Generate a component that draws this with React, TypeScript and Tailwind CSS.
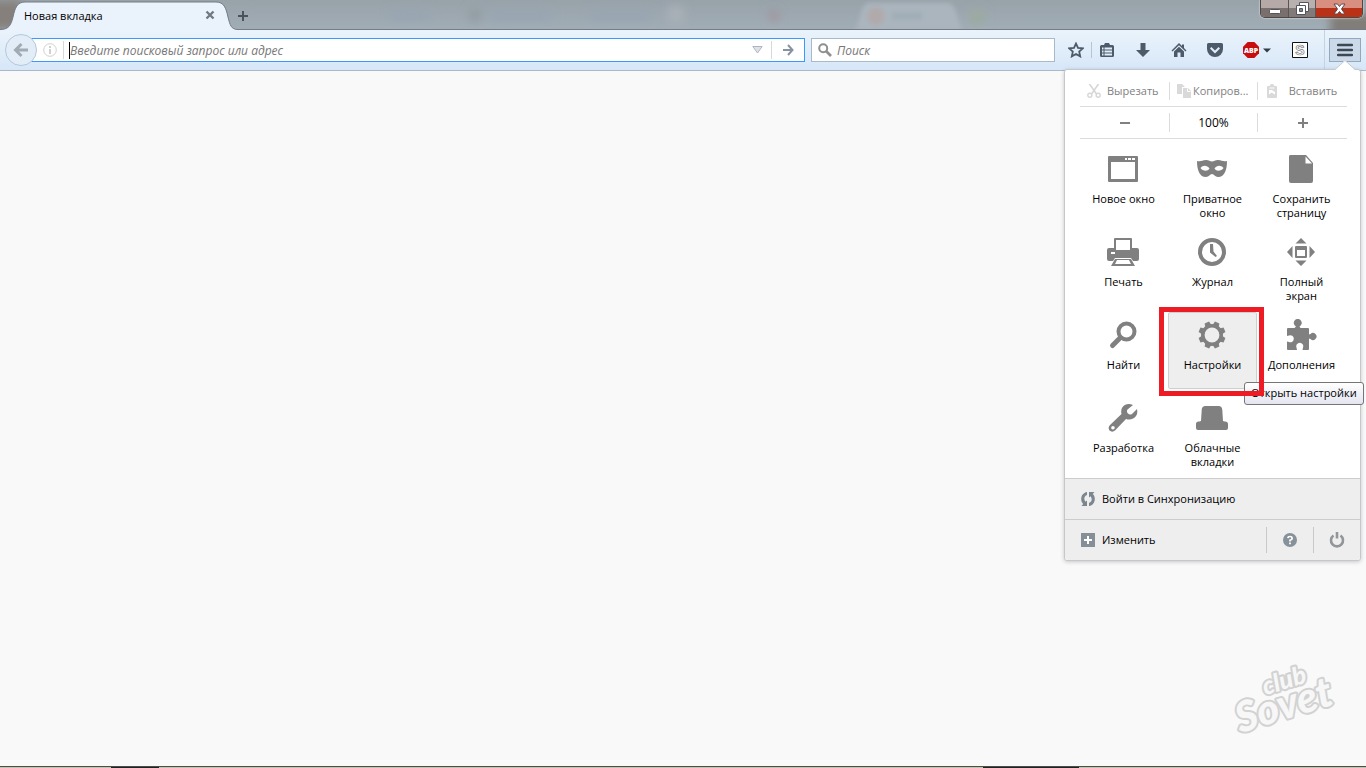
import type { ReactNode } from "react";
import clsx from "clsx";

const TOOL_COLOR = "#4d5a69";

type MenuItem = {
  label: string;
  icon: ReactNode;
  active?: boolean;
};

const menuItems: MenuItem[] = [
  {
    label: "Новое окно",
    icon: (
      <path
        fillRule="evenodd"
        d="M2 3h28a1 1 0 0 1 1 1v24a1 1 0 0 1-1 1H2a1 1 0 0 1-1-1V4a1 1 0 0 1 1-1zM4 9v17h24V9zM18 5v2h2V5zm3 0v2h3V5zm4 0v2h3V5z"
      />
    ),
  },
  {
    label: "Приватное окно",
    icon: (
      <path
        fillRule="evenodd"
        d="M1 8c4 1 5-1 9-1 3 0 4 1.500 6 1.500S19 7 22 7c4 0 5 2 9 1 0 8-2 16-9 16-3 0-4-3-6-3s-3 3-6 3C3 24 1 16 1 8zM4.500 15c2 3 7 4 9 .5C11 12 7 12 4.500 15zm14 .5c2 3.500 7 2.500 9-.5-2.500-3-6.500-3-9 .5z"
      />
    ),
  },
  {
    label: "Сохранить страницу",
    icon: (
      <path
        fillRule="evenodd"
        d="M5 2h16l7 8v18a2 2 0 0 1-2 2H6a2 2 0 0 1-2-2V4a2 2 0 0 1 1-2zM20.500 3.500V10.500H27z"
      />
    ),
  },
  {
    label: "Печать",
    icon: (
      <>
        <path fillRule="evenodd" d="M8 2h16a1 1 0 0 1 1 1v12H7V3a1 1 0 0 1 1-1zm1 2v10h14V4z" />
        <path
          fillRule="evenodd"
          d="M2 12h5v2h18v-2h5a2 2 0 0 1 2 2v9a2 2 0 0 1-2 2h-4l-2-3H8l-2 3H2a2 2 0 0 1-2-2v-9a2 2 0 0 1 2-2zm2 4v2h4v-2z"
        />
        <path fillRule="evenodd" d="M8 23h16l4 7H4zm2 1l-2 4h16l-2-4z" />
      </>
    ),
  },
  {
    label: "Журнал",
    icon: (
      <>
        <circle cx="16" cy="16" r="12" fill="none" stroke="currentColor" strokeWidth="4" />
        <path d="M14 8h3l.5 7.500L21 20l-1.500 1L14 16.500z" />
      </>
    ),
  },
  {
    label: "Полный экран",
    icon: (
      <>
        <path
          fillRule="evenodd"
          d="M11 10h10a1 1 0 0 1 1 1v10a1 1 0 0 1-1 1H11a1 1 0 0 1-1-1V11a1 1 0 0 1 1-1zm1 4v6h8v-6z"
        />
        <path d="M16 2l5.500 5.500h-11zM16 30l5.500-5.500h-11zM2 16l5.500-6v12zM30 16l-5.500-6v12z" />
      </>
    ),
  },
  {
    label: "Найти",
    icon: (
      <>
        <circle cx="19.500" cy="12.500" r="8" fill="none" stroke="currentColor" strokeWidth="4" />
        <path d="M13 19l-7.500 7.500" fill="none" stroke="currentColor" strokeWidth="5" strokeLinecap="round" />
      </>
    ),
  },
  {
    label: "Настройки",
    active: true,
    icon: (
      <>
        <circle cx="16" cy="16" r="9.200" fill="none" stroke="currentColor" strokeWidth="3.600" />
        <g>
          {[22.5, 67.5, 112.5, 157.5, 202.5, 247.5, 292.5, 337.5].map((angle) => (
            <path key={angle} d="M12.800 6.500L13.600 2.500h4.800l.8 4z" transform={`rotate(${angle} 16 16)`} />
          ))}
        </g>
      </>
    ),
  },
  {
    label: "Дополнения",
    icon: (
      <path d="M3 9H9.500L11 7.500A4 4 0 1 1 14.500 7.500L15.500 9H23q1 0 1 1v5.500l1.500-.5A3.500 3.500 0 1 1 25.500 20L24 19.500V30q0 1-1 1H17.500l.5-2.500a3.500 3.500 0 1 0-6.500 0L12 31H3q-1 0-1-1V22.500l2 .5A3.500 3.500 0 1 0 4 16.500L2 17V10q0-1 1-1z" />
    ),
  },
  {
    label: "Разработка",
    icon: (
      <path
        fillRule="evenodd"
        d="M26 3c-4-2-9-1-11 3-1 2-1 4-.5 6L3 23c-2 2-1.500 4-.5 5.500 1.500 1.500 4 1.500 5.500 0L19 17c4 1.500 8 0 10-3 1.500-2 1.500-4.500 1-7l-5 5c-1.500 1-3 .5-4-.5s-1.500-2.500-.5-4zM6 24a1.800 1.800 0 1 1-.1 3.600A1.800 1.800 0 0 1 6 24z"
      />
    ),
  },
  {
    label: "Облачные вкладки",
    icon: (
      <path d="M10 4h12c3 0 4 1 4.300 4L27 19c2 1 5 0 5 3v4a2 2 0 0 1-2 2H2a2 2 0 0 1-2-2v-4c0-3 3-2 5-3l.7-11C6 5 7 4 10 4z" />
    ),
  },
];

function TitleBar() {
  return (
    <header className="relative flex h-[30px] shrink-0 border-b border-[#747d85] bg-linear-to-b from-[#98a2a9] to-[#a1adb6]">
      {/* blurred windows showing through the glass frame */}
      <svg className="absolute inset-0 h-full w-full" aria-hidden="true">
        <defs>
          <filter id="glass">
            <feGaussianBlur stdDeviation="5" />
          </filter>
          <filter id="soft">
            <feGaussianBlur stdDeviation="2" />
          </filter>
        </defs>
        <g filter="url(#glass)">
          <rect x="-20" y="0" width="42" height="30" fill="#85807c" />
          <rect x="1330" y="14" width="60" height="30" fill="#817d78" />
          <rect x="390" y="11" width="40" height="10" fill="#98a5b2" />
          <rect x="490" y="11" width="60" height="10" fill="#98a5b2" />
          <rect x="590" y="11" width="60" height="10" fill="#98a5b2" />
          <circle cx="475" cy="15" r="7" fill="#919ba2" />
          <circle cx="676" cy="14" r="9" fill="#aab1b8" />
          <circle cx="977" cy="17" r="8" fill="#9bab9f" />
          <circle cx="774" cy="16" r="5" fill="#a18f98" />
        </g>
        <g filter="url(#soft)">
          <path d="M856 30l6-20q2-7 8-7h76q7 0 9 7l7 20z" fill="#aab5bd" />
          <circle cx="876" cy="16" r="9" fill="#b0aaac" />
          <rect x="892" y="12" width="30" height="8" fill="#a0adb7" />
        </g>
      </svg>
      <div className="relative flex h-[30px] w-[230px] items-center">
        <svg className="absolute inset-0 h-[30px] w-[238px]" viewBox="0 0 238 30" aria-hidden="true">
          <path
            d="M0 29.500C9 29.500 11 25 13 17 15 8 17 2 25 2H216C224 2 226 8 228 17 230 25 231 29.500 238 29.500V30H0z"
            fill="#eaf2fb"
          />
          <path
            d="M0 29.500C9 29.500 11 25 13 17 15 8 17 2 25 2H216C224 2 226 8 228 17 230 25 231 29.500 238 29.500"
            fill="none"
            stroke="#747b82"
          />
        </svg>
        <span className="relative ml-6 flex-1 pt-0.5 text-black">Новая вкладка</span>
        <button aria-label="Закрыть вкладку" className="relative mr-3 flex h-4 w-4 items-center justify-center">
          <svg width="10" height="10" viewBox="0 0 10 10" aria-hidden="true">
            <path d="M1.500 1.500l7 7M8.500 1.500l-7 7" stroke="#727980" strokeWidth="2.400" />
          </svg>
        </button>
      </div>
      <button aria-label="Новая вкладка" className="relative ml-[5px] flex w-4 items-center justify-center pt-0.5">
        <svg width="12" height="12" viewBox="0 0 12 12" aria-hidden="true">
          <path d="M6 1v10M1 6h10" stroke="#4a535b" strokeWidth="2" />
        </svg>
      </button>
      <div className="relative mr-[3px] ml-auto flex h-[18px] overflow-hidden rounded-b-[5px] border border-t-0 border-[#4d4746] shadow-[0_0_2px_#ffffff]">
        <button
          aria-label="Свернуть"
          className="flex w-7 items-center justify-center border-r border-[#5a5555] bg-linear-to-b from-[#b5aaa7] from-45% to-[#796f6c] to-50%"
        >
          <svg width="12" height="14" viewBox="0 0 12 14" aria-hidden="true">
            <rect x=".5" y="7.500" width="11" height="4" rx="1" fill="#fff" stroke="#52565e" />
          </svg>
        </button>
        <button
          aria-label="Восстановить"
          className="flex w-[27px] items-center justify-center border-r border-[#5a5555] bg-linear-to-b from-[#b8b0ae] from-45% to-[#82797a] to-50%"
        >
          <svg width="13" height="13" viewBox="0 0 13 13" aria-hidden="true">
            <path d="M3.500.5h9v9h-9z" fill="#fff" stroke="#52565e" />
            <path d="M.5 3.500h9v9h-9z" fill="#fff" stroke="#52565e" />
            <path d="M3.500 6.500h3v3h-3z" fill="#8c8484" stroke="#52565e" />
          </svg>
        </button>
        <button
          aria-label="Закрыть"
          className="flex w-[46px] items-center justify-center bg-linear-to-b from-[#d88f80] from-45% to-[#b93116] to-50%"
        >
          <svg width="13" height="12" viewBox="0 0 13 12" aria-hidden="true">
            <path
              d="M1 1h3.500l2 2.500 2-2.500H12L8.500 6l3.500 5H8.500l-2-2.500-2 2.500H1l3.500-5z"
              fill="#fff"
              stroke="#5b4a50"
            />
          </svg>
        </button>
      </div>
    </header>
  );
}

function ToolButton({ label, className, children }: { label: string; className: string; children: ReactNode }) {
  return (
    <button aria-label={label} className={clsx("flex h-6 items-center justify-center", className)}>
      <svg width="16" height="16" viewBox="0 0 16 16" fill={TOOL_COLOR} aria-hidden="true">
        {children}
      </svg>
    </button>
  );
}

function AddressBar() {
  return (
    <div className="flex flex-1 items-center">
      <button
        aria-label="Назад"
        className="z-10 flex h-8 w-8 items-center justify-center rounded-full border border-[#b5c7dc] bg-[#e3edf8]"
      >
        <svg width="16" height="16" viewBox="0 0 16 16" aria-hidden="true">
          <path d="M8.500 2L2.500 8l6 6M3 8h12" fill="none" stroke="#a1abb4" strokeWidth="3" />
        </svg>
      </button>
      <div className="-ml-2 flex h-6 flex-1 items-center border border-[#3b99fc] bg-white pl-[13px]">
        <svg width="14" height="14" viewBox="0 0 14 14" aria-hidden="true">
          <circle cx="7" cy="7" r="6.300" fill="none" stroke="#d0d0d0" />
          <path d="M6 3h2v2H6zM6 6h2v5H6z" fill="#d0d0d0" />
        </svg>
        <span className="mr-[5px] ml-1.5 h-[18px] w-px bg-[#d8d8d8]" />
        <span className="h-[17px] w-px bg-black" />
        <input
          aria-label="Адресная строка"
          placeholder="Введите поисковый запрос или адрес"
          className="min-w-0 flex-1 bg-transparent pt-0.5 text-xs italic outline-none placeholder:text-[#777777]"
        />
        <button aria-label="Показать историю" className="flex w-7 justify-center">
          <svg width="11" height="8" viewBox="0 0 11 8" aria-hidden="true">
            <path d="M.8.500h9.400L5.500 7z" fill="#dde2e8" stroke="#b0b6bd" />
          </svg>
        </button>
        <span className="h-[18px] w-px bg-[#d8d8d8]" />
        <button aria-label="Перейти" className="flex w-8 justify-center">
          <svg width="12" height="12" viewBox="0 0 12 12" aria-hidden="true">
            <path d="M6 1l4.500 5L6 11M1 6h9" fill="none" stroke="#8793a1" strokeWidth="2" />
          </svg>
        </button>
      </div>
    </div>
  );
}

function Toolbar() {
  return (
    <nav className="relative flex h-[41px] shrink-0 items-center border-b border-[#a9b8cd] bg-linear-to-b from-[#eaf3fb] to-[#d7e7f8] pr-[5px] pl-[5px]">
      <AddressBar />
      <div className="ml-1.5 flex h-6 w-[244px] items-center border border-[#a9b9cc] bg-white pl-1.5">
        <svg width="14" height="14" viewBox="0 0 14 14" aria-hidden="true">
          <circle cx="5.200" cy="5.200" r="4" fill="none" stroke="#8f8f8f" strokeWidth="2" />
          <path d="M8 8l5 5" stroke="#8f8f8f" strokeWidth="2.600" />
        </svg>
        <input
          aria-label="Поиск"
          placeholder="Поиск"
          className="ml-[5px] min-w-0 flex-1 bg-transparent pt-0.5 text-xs italic outline-none placeholder:text-[#777777]"
        />
      </div>

      <ToolButton label="Добавить в закладки" className="ml-1.5 w-[30px]">
        <path
          d="M8 1.500l2 4.400 4.800.5-3.600 3.200 1 4.800L8 12l-4.200 2.400 1-4.800L1.200 6.400 6 5.900z"
          fill="none"
          stroke={TOOL_COLOR}
          strokeWidth="1.800"
        />
      </ToolButton>
      <span className="mr-px h-4 w-px bg-[#b6c4d3]" />
      <ToolButton label="Закладки" className="w-7">
        <path
          fillRule="evenodd"
          d="M2.500 3H5l1-2h4l1 2h2.500Q15 3 15 4.500v9q0 1.500-1.500 1.500h-11Q1 15 1 13.500v-9Q1 3 2.500 3zM3 5.500v2h1.500v-2zm2.500 0v2H13v-2zM3 8.500v2h1.500v-2zm2.500 0v2H13v-2zM3 11.500v2h1.500v-2zm2.500 0v2H13v-2z"
        />
      </ToolButton>
      <ToolButton label="Загрузки" className="ml-1 w-9">
        <path d="M5.500 1h5v7H15l-7 7-7-7h4.500z" />
      </ToolButton>
      <ToolButton label="Домой" className="w-9">
        <path d="M8 1L.5 8.500l1 1L8 3.200l6.500 6.300 1-1L13 6V2.500h-2V4z" />
        <path d="M8 4.800L3 9.500V15h3.500v-4.500h3V15H13V9.500z" />
      </ToolButton>
      <ToolButton label="Pocket" className="w-9">
        <path
          fillRule="evenodd"
          d="M1.500 1h13Q16 1 16 2.500V7A8 8 0 0 1 0 7V2.500Q0 1 1.500 1zM3 6.500l5 5 5-5L11.600 5 8 8.500 4.400 5z"
        />
      </ToolButton>
      <button aria-label="Adblock Plus" className="flex h-6 w-10 items-center justify-end gap-1 pr-0.5">
        <svg width="16" height="16" viewBox="0 0 16 16" aria-hidden="true">
          <path d="M4.700 0h6.600L16 4.700v6.600L11.300 16H4.700L0 11.300V4.700z" fill="#c70d0d" />
          <text
            x="8"
            y="10.500"
            textAnchor="middle"
            fontSize="7"
            fontWeight="800"
            fill="#fff"
            className="font-['Open_Sans',sans-serif]"
          >
            ABP
          </text>
        </svg>
        <svg width="8" height="5" viewBox="0 0 8 5" aria-hidden="true">
          <path d="M0 .5h8L4 4.500z" fill="#333b44" />
        </svg>
      </button>
      <button aria-label="S" className="ml-[11px] flex h-6 w-8 items-center justify-center">
        <svg width="16" height="16" viewBox="0 0 16 16" aria-hidden="true">
          <path d="M.5.500h15v15H.5z" fill="#fff" stroke="#111" />
          <text
            x="8"
            y="13"
            textAnchor="middle"
            fontSize="14"
            fontWeight="700"
            fill="#fff"
            stroke="#777"
            strokeWidth=".7"
            className="font-['Liberation_Sans',sans-serif]"
          >
            S
          </text>
        </svg>
      </button>
      <span className="mr-1 ml-2 h-10 w-px bg-[#c3d3e4]" />
      <div className="relative">
        <button
          aria-label="Открыть меню"
          className="flex h-6 w-8 items-center justify-center border border-[#93a7be] bg-[#cbd9e8]"
        >
          <svg width="16" height="14" viewBox="0 0 16 14" aria-hidden="true">
            <path d="M1 2h14M1 7h14M1 12h14" stroke="#3d4855" strokeWidth="2.400" strokeLinecap="round" />
          </svg>
        </button>
        <MainMenu />
      </div>
    </nav>
  );
}

function MainMenu() {
  return (
    <div className="absolute top-[31px] right-0 z-20 w-[297px] rounded-[3px] border border-[#c4c8cc] bg-white shadow-[0_1px_4px_rgba(0,0,0,0.2)]">
      <svg className="absolute -top-[10px] right-[5px]" width="20" height="11" viewBox="0 0 20 11" aria-hidden="true">
        <path d="M0 10L10 0l10 10v1H0z" fill="#fff" />
        <path d="M0 9.500L10 .5l10 9" fill="none" stroke="#c4ccd6" />
      </svg>
      <div className="px-3.5 pt-1.5">
        <div className="-mr-px ml-px grid h-[31px] grid-cols-3 items-center border-b border-[#dcdcdc] text-[#7f7f7f]">
          <button className="flex h-[18px] items-center">
            <svg className="ml-[7px] shrink-0" width="14" height="14" viewBox="0 0 14 14" aria-hidden="true">
              <path d="M2.500 0l7 10M11.500 0l-7 10" stroke="#d6d6d6" strokeWidth="1.600" />
              <circle cx="2.800" cy="11.300" r="2" fill="none" stroke="#d6d6d6" strokeWidth="1.400" />
              <circle cx="11.200" cy="11.300" r="2" fill="none" stroke="#d6d6d6" strokeWidth="1.400" />
            </svg>
            <span className="ml-1.5 pt-px">Вырезать</span>
          </button>
          <button className="flex h-[18px] items-center border-x border-[#dcdcdc]">
            <svg className="ml-[7px] shrink-0" width="14" height="14" viewBox="0 0 14 14" aria-hidden="true">
              <path d="M0 0h5l3 3H5v7H0z" fill="#d9d9d9" />
              <path d="M6 4h5l3 3v7H6z" fill="#d9d9d9" />
              <path d="M10.500 4.500v3h3" fill="none" stroke="#fff" />
            </svg>
            <span className="ml-0.5 pt-px">Копиров...</span>
          </button>
          <button className="flex h-[18px] items-center">
            <svg className="ml-[7px] shrink-0" width="14" height="14" viewBox="0 0 14 14" aria-hidden="true">
              <path
                fillRule="evenodd"
                d="M3 2h1.500L6 0h2l1.500 2H11q1 0 1 1v10q0 1-1 1H3q-1 0-1-1V3q0-1 1-1zM4.500 3.500v1h5v-1zM4 6v4.500L6.500 8.500 10 10.500V8L7 6z"
                fill="#d9d9d9"
              />
            </svg>
            <span className="flex-1 pt-px text-center">Вставить</span>
          </button>
        </div>
        <div className="-mr-px ml-px grid h-8 grid-cols-3 items-center border-b border-[#dcdcdc] text-black">
          <button aria-label="Уменьшить" className="flex h-[19px] items-center justify-center">
            <svg width="10" height="10" viewBox="0 0 10 10" aria-hidden="true">
              <path d="M0 5h10" stroke="#808080" strokeWidth="2" />
            </svg>
          </button>
          <button className="flex h-[19px] items-center justify-center border-x border-[#dcdcdc] text-xs">100%</button>
          <button aria-label="Увеличить" className="flex h-[19px] items-center justify-center">
            <svg width="10" height="10" viewBox="0 0 10 10" aria-hidden="true">
              <path d="M0 5h10M5 0v10" stroke="#808080" strokeWidth="2" />
            </svg>
          </button>
        </div>
        <div className="grid grid-cols-3 gap-y-1.5 pt-[7px] pb-1.5 text-black">
          {menuItems.map((item) => (
            <div key={item.label} className="relative flex">
              <button
                className={clsx(
                  "flex min-h-[77px] w-full flex-col items-center rounded-[2px] border pt-1.5 leading-[14px]",
                  item.active ? "border-[#cfcfcf] bg-[#eeeeee]" : "border-transparent"
                )}
              >
                <svg
                  width="32"
                  height="32"
                  viewBox="0 0 32 32"
                  fill="currentColor"
                  className="mr-px shrink-0 text-[#808080]"
                  aria-hidden="true"
                >
                  {item.icon}
                </svg>
                <span className="mt-[7px] max-w-[76px]">{item.label}</span>
              </button>
              {item.active && (
                <>
                  <div
                    role="tooltip"
                    className="absolute top-[70px] left-[76px] z-10 flex h-[23px] items-center rounded-[3px] border border-[#767676] bg-linear-to-b from-white to-[#e4e5f0] px-1.5 whitespace-nowrap"
                  >
                    Открыть настройки
                  </div>
                  <div className="pointer-events-none absolute -top-[5px] -right-[7px] -bottom-[7px] -left-[9px] z-10 border-5 border-[#ed1c24]" />
                </>
              )}
            </div>
          ))}
        </div>
      </div>
      <div className="rounded-b-[3px] bg-[#eeeeee] text-black">
        <button className="flex h-[41px] w-full items-center border-t border-[#cccccc] pl-4">
          <svg width="14" height="14" viewBox="0 0 14 14" fill="#7b868f" aria-hidden="true">
            <path d="M6 0v3C3 4 2.500 7.500 4.500 9.800L6 8.500V14H.5l1.700-2C-1.500 8.500 0 1 6 0z" />
            <path d="M8 14v-3c3-1 3.500-4.500 1.500-6.800L8 5.500V0h5.500l-1.700 2C15.500 5.500 14 13 8 14z" />
          </svg>
          <span className="ml-[7px] pt-px">Войти в Синхронизацию</span>
        </button>
        <div className="flex h-[41px] items-center border-t border-[#cccccc]">
          <button className="flex h-full flex-1 items-center pl-4">
            <svg width="14" height="14" viewBox="0 0 14 14" aria-hidden="true">
              <path d="M0 0h14v14H0z" fill="#858f97" />
              <path d="M7 3v8M3 7h8" stroke="#fff" strokeWidth="2" />
            </svg>
            <span className="ml-[7px] pt-px">Изменить</span>
          </button>
          <button
            aria-label="Справка"
            className="flex h-[26px] w-[47px] items-center justify-center border-l border-[#c9c9c9]"
          >
            <svg width="14" height="14" viewBox="0 0 14 14" aria-hidden="true">
              <circle cx="7" cy="7" r="7" fill="#87919a" />
              <path d="M4.800 5.200Q5 3.500 7 3.500t2.200 1.700Q9.200 6.500 7 7.200V8.500" fill="none" stroke="#fff" strokeWidth="1.700" />
              <path d="M6.100 9.600h1.800v1.700H6.100z" fill="#fff" />
            </svg>
          </button>
          <button
            aria-label="Выход"
            className="flex h-[26px] w-[47px] items-center justify-center border-l border-[#c9c9c9]"
          >
            <svg width="16" height="16" viewBox="0 0 16 16" aria-hidden="true">
              <path d="M4.500 3.500a6 6 0 1 0 7 0" fill="none" stroke="#919699" strokeWidth="2.600" />
              <path d="M8 0v6.500" stroke="#919699" strokeWidth="2.600" />
            </svg>
          </button>
        </div>
      </div>
    </div>
  );
}

function Watermark() {
  return (
    <svg
      className="absolute right-3 bottom-1 text-[#f7f7f7]"
      width="140"
      height="120"
      viewBox="0 0 140 120"
      role="img"
      aria-label="club Sovet"
    >
      <g
        transform="rotate(-17 70 60)"
        fill="currentColor"
        stroke="#d2d2d2"
        strokeWidth="4"
        strokeLinejoin="round"
        paintOrder="stroke"
        fontStyle="italic"
        fontWeight="900"
        className="font-[Lato,sans-serif]"
      >
        <text x="54" y="48" fontSize="25">
          club
        </text>
        <text x="19" y="77" fontSize="42">
          Sovet
        </text>
      </g>
    </svg>
  );
}

export default function App() {
  return (
    <div className="flex h-screen flex-col overflow-hidden bg-[#f9f9f9] font-['Open_Sans','Noto_Sans',sans-serif] text-[11px]">
      <TitleBar />
      <Toolbar />
      <main className="relative flex-1">
        <Watermark />
      </main>
      <footer className="flex h-0.5 shrink-0 border-t border-[#4c4c48] bg-[#c5c2ae]">
        <span className="ml-[111px] h-px w-12 bg-[#222222]" />
        <span className="mr-[287px] ml-auto h-px w-24 bg-[#222222]" />
      </footer>
    </div>
  );
}
